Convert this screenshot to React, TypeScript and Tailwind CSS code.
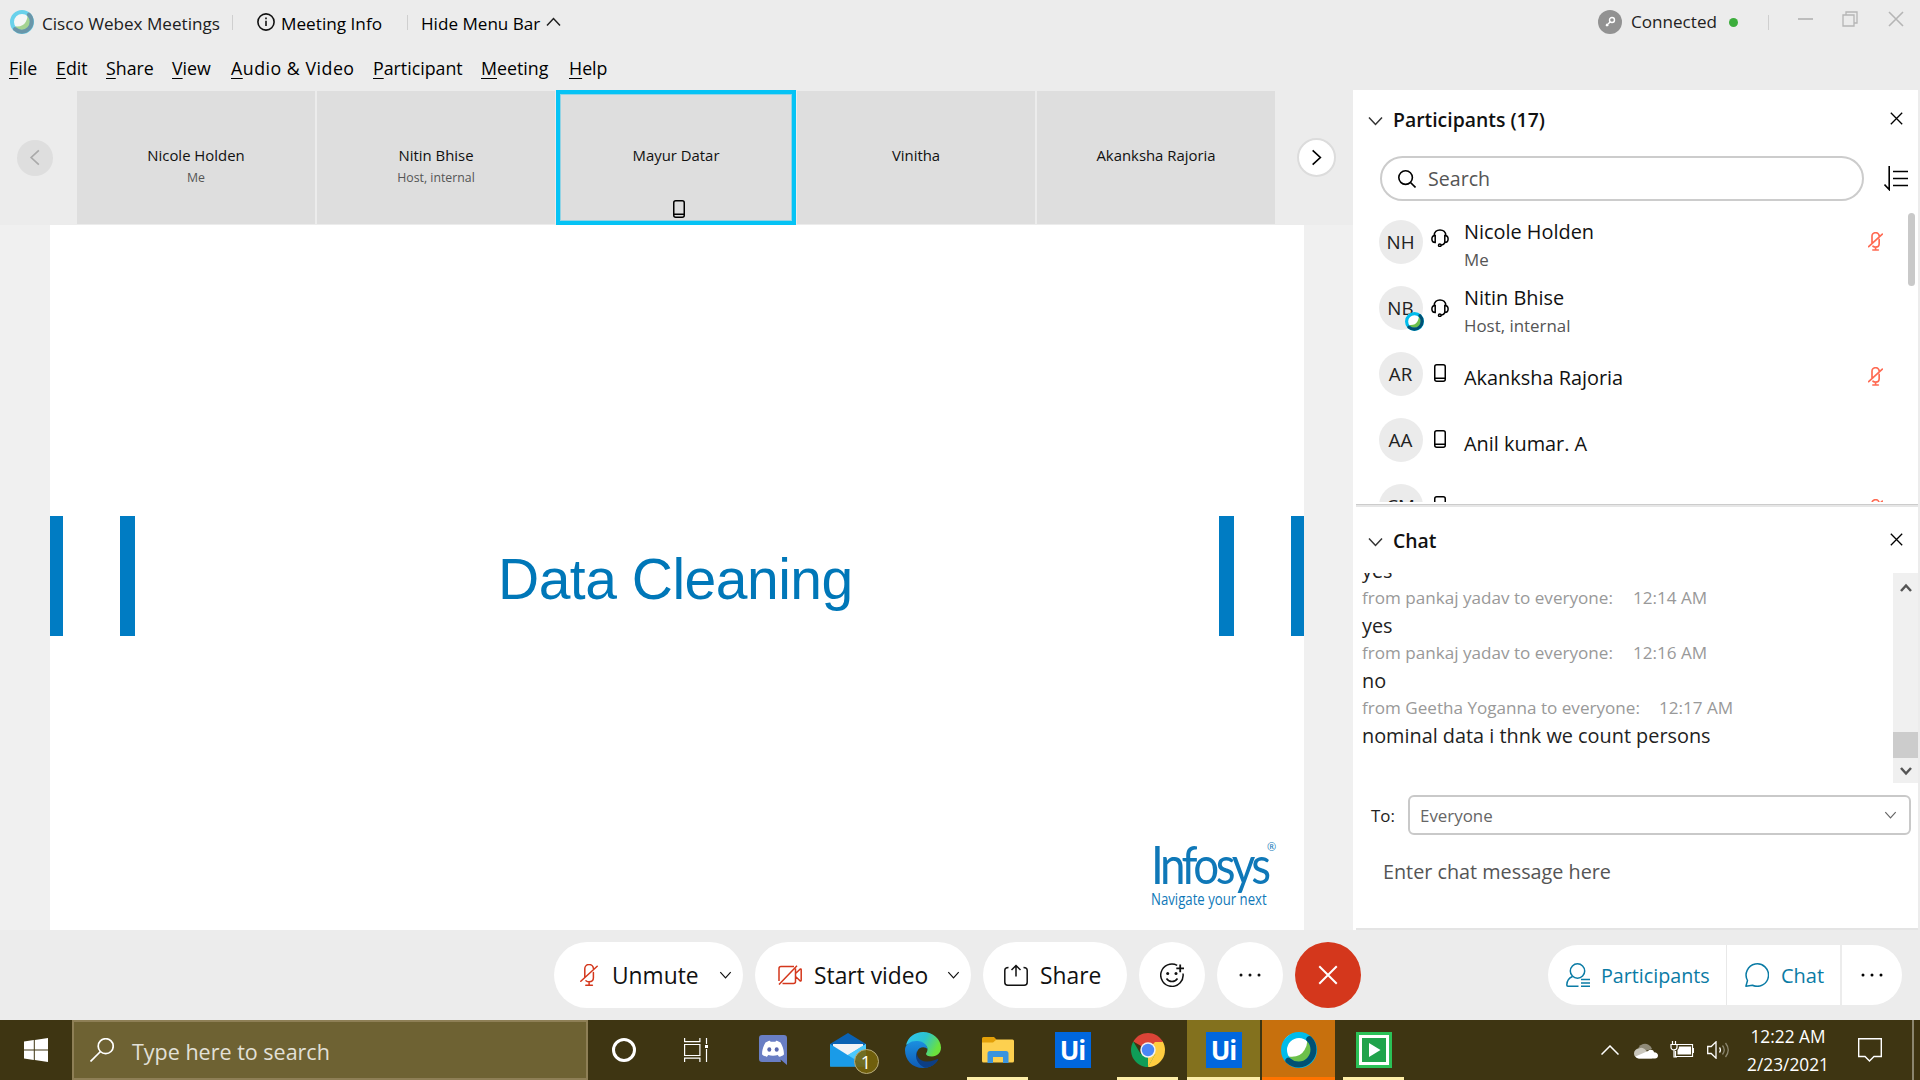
import React from "react";

type P = { className?: string };

const WebexBall = ({ className = "" }: P) => (
  <svg viewBox="0 0 36 36" fill="none" className={className}>
    <circle cx="18" cy="18" r="12.500" fill="#6cc04a" />
    <path d="M26 9.500A12.500 12.500 0 1 0 7.500 24.500Q19 26 23.500 18Q26.500 13 26 9.500Z" fill="#fff" />
    <circle cx="18" cy="18" r="15" stroke="#00bceb" strokeWidth="6" />
    <path d="M28.300 7.100A15 15 0 0 1 7.400 28.600" stroke="#005073" strokeWidth="6" strokeLinecap="round" />
  </svg>
);

const Chevron = ({ className = "", d = "M1 1.500 7.500 8.500 14 1.500" }: P & { d?: string }) => (
  <svg viewBox="0 0 15 10" fill="none" stroke="currentColor" strokeWidth="1.5" className={className}>
    <path d={d} />
  </svg>
);

const Cross = ({ className = "" }: P) => (
  <svg viewBox="0 0 16 16" fill="none" stroke="currentColor" strokeWidth="1.6" className={className}>
    <path d="M1 1 15 15M15 1 1 15" />
  </svg>
);

const Phone = ({ className = "" }: P) => (
  <svg viewBox="0 0 12 18" fill="none" stroke="currentColor" strokeWidth="1.5" className={className}>
    <rect x=".75" y=".75" width="10.500" height="16.500" rx="2" />
    <path d="M1 14.250h10" />
  </svg>
);

const Headset = ({ className = "" }: P) => (
  <svg viewBox="0 0 18 18" fill="none" stroke="currentColor" strokeWidth="1.500" className={className}>
    <path d="M3.200 6.500C3.200 3 5.700.9 9 .9s5.800 2.100 5.800 5.600M4.200 13.500C2 13.500.9 12 .9 10s1.100-3.500 3.300-3.500zM13.800 13.500c2.200 0 3.300-1.500 3.300-3.500s-1.100-3.500-3.300-3.500zM13.800 13.500c-.6 1.700-2 2.500-4 2.700" />
    <circle cx="8.800" cy="16.200" r="1.300" />
  </svg>
);

const MicOff = ({ className = "", weight = 1.5 }: P & { weight?: number }) => (
  <svg viewBox="0 0 18 22" fill="none" stroke="currentColor" strokeWidth={weight} strokeLinecap="round" className={className}>
    <path d="M4.800 13.500V5a4.300 4.300 0 0 1 8.600-.5M13.400 8.500v5.300c0 2.300-1.700 4-4.300 4-1.300 0-2.300-.4-3.100-1.100M9.100 18v3M5.800 21.200h6.600M.8 17.200 17.200 2.200" />
  </svg>
);

const Dots = ({ className = "" }: P) => (
  <svg viewBox="0 0 22 4" fill="currentColor" className={className}>
    <circle cx="2" cy="2" r="1.500" />
    <circle cx="11" cy="2" r="1.500" />
    <circle cx="20" cy="2" r="1.500" />
  </svg>
);

const MENU: [string, string][] = [
  ["File", "w-[47px]"],
  ["Edit", "w-[50px]"],
  ["Share", "w-[66px]"],
  ["View", "w-[59px]"],
  ["Audio & Video", "w-[142px] tracking-[0.5px]"],
  ["Participant", "w-[108px]"],
  ["Meeting", "w-[88px]"],
  ["Help", "w-[50px]"],
];

const TitleBar = () => (
  <header className="flex h-[45px] shrink-0 items-start text-[17.100px] leading-[24px] text-[#202020]">
    <WebexBall className="mt-[10px] ml-[10px] h-6 w-6 opacity-55" />
    <span className="mt-[12px] ml-[8px] w-[190px]">Cisco Webex Meetings</span>
    <i className="mt-[15px] h-[15px] w-px bg-[#cfcfcf]" />
    <svg viewBox="0 0 18 18" fill="none" stroke="#111" strokeWidth="1.600" className="mt-[13px] ml-[24px] h-[18px] w-[18px]">
      <circle cx="9" cy="9" r="8.100" />
      <path d="M9 7.800v5.200M9 4.600v1.700" />
    </svg>
    <span className="mt-[12px] ml-[6px] w-[126px] text-[17.200px] text-black">Meeting Info</span>
    <i className="mt-[15px] h-[15px] w-px bg-[#cfcfcf]" />
    <span className="mt-[12px] ml-[13px] w-[125px] text-black">Hide Menu Bar</span>
    <Chevron className="mt-[17px] h-[10px] w-[15px]" d="M1 8.500 7.500 1.500 14 8.500" />
    <span className="grow" />
    <span className="mt-[10px] flex h-6 w-6 items-center justify-center rounded-full bg-[#929292]">
      <svg viewBox="0 0 12 12" fill="none" stroke="#fff" strokeWidth="1.400" className="h-3 w-3">
        <circle cx="8" cy="4" r="2.500" />
        <path d="M6.300 5.700 2 10M2.200 8l2 2" />
      </svg>
    </span>
    <span className="mt-[10px] ml-[9px] w-[98px] text-[#222]">Connected</span>
    <i className="mt-[18px] h-[9px] w-[9px] rounded-full bg-[#3cad3c]" />
    <i className="mt-[15px] ml-[30px] h-[15px] w-px bg-[#cfcfcf]" />
    <i className="mt-[18px] ml-[29px] h-[2px] w-[15px] bg-[#bdbdbd]" />
    <svg viewBox="0 0 16 16" fill="none" stroke="#b5b5b5" strokeWidth="1.300" className="mt-[11px] ml-[29px] h-4 w-4">
      <path d="M1 4h11v11H1zM4 4V1h11v11h-3" />
    </svg>
    <Cross className="mt-[11px] mr-[16px] ml-[30px] h-4 w-4 text-[#b5b5b5]" />
  </header>
);

const MenuBar = () => (
  <nav className="flex h-[45px] shrink-0 pt-[11px] pl-[9px] text-[17.800px] leading-[24px] text-black">
    {MENU.map(([label, w]) => (
      <span key={label} className={`${w} shrink-0 whitespace-nowrap`}>
        <span className="underline decoration-1 underline-offset-[3px]">{label[0]}</span>
        {label.slice(1)}
      </span>
    ))}
  </nav>
);

const Tile = ({ name, sub, active }: { name: string; sub?: string; active?: boolean }) => (
  <div
    className={
      active
        ? "flex h-[135px] w-[240px] shrink-0 flex-col items-center border-4 border-[#05c3f5] bg-[#dedede] pt-[49px] shadow-[inset_0_0_0_1px_#93d3e4]"
        : "mt-px flex h-[133px] w-[238px] shrink-0 flex-col items-center bg-[#dedede] pt-[52px]"
    }
  >
    <span className="text-[14.900px] leading-[24px] text-[#111]">{name}</span>
    {sub && <span className="mt-px text-[12.300px] leading-[20px] text-[#555]">{sub}</span>}
    {active && <Phone className="mt-[33px] ml-[5px] h-[18px] w-[12px] shrink-0" />}
  </div>
);

const FilmStrip = () => (
  <div className="flex h-[135px] shrink-0">
    <div className="flex w-[77px] items-center">
      <span className="ml-[17px] flex h-9 w-9 items-center justify-center rounded-full bg-[#dedede] text-[#aaa]">
        <Chevron className="h-[11px] w-[18px] rotate-90" />
      </span>
    </div>
    <div className="flex w-[1199px]">
      <Tile name="Nicole Holden" sub="Me" />
      <i className="w-[2px]" />
      <Tile name="Nitin Bhise" sub="Host, internal" />
      <i className="w-px" />
      <Tile name="Mayur Datar" active />
      <i className="w-px" />
      <Tile name="Vinitha" />
      <i className="w-[2px]" />
      <Tile name="Akanksha Rajoria" />
    </div>
    <span className="mt-[48px] ml-[21px] flex h-[39px] w-[39px] items-center justify-center rounded-full border-2 border-[#dcdcdc] bg-white">
      <Chevron className="h-[11px] w-[17px] -rotate-90" />
    </span>
  </div>
);

const Slide = () => (
  <main className="flex min-h-0 grow bg-[#f0f0f0] pr-[49px] pl-[50px]">
    <div className="flex grow flex-col bg-white">
      <div className="mt-[291px] flex h-[120px] items-start">
        <i className="h-full w-[13px] bg-[#007cc3]" />
        <i className="ml-[57px] h-full w-[15px] bg-[#007cc3]" />
        <h1 className="mt-[30px] ml-[363px] w-[721px] font-['Liberation_Sans',sans-serif] text-[57px] leading-[66px] tracking-[-0.5px] whitespace-nowrap text-[#0077b8]">
          Data Cleaning
        </h1>
        <i className="h-full w-[15px] bg-[#007cc3]" />
        <i className="ml-[57px] h-full w-[13px] bg-[#007cc3]" />
      </div>
      <div className="mt-[199px] ml-[1101px] text-[#0f78b8]">
        <div className="flex h-[54px] items-start">
          <span className="w-[116px] origin-left scale-x-[0.88] font-['Lato',sans-serif] text-[52px] leading-[58px] tracking-[-4px]">Infosys</span>
          <span className="mt-[6px] text-[11px] leading-[12px]">®</span>
        </div>
        <div className="w-[136px] origin-left scale-x-[0.84] text-[15.700px] leading-[20px] whitespace-nowrap">Navigate your next</div>
      </div>
    </div>
  </main>
);

const PEOPLE = [
  { init: "NH", name: "Nicole Holden", sub: "Me", phone: false, muted: true, badge: false },
  { init: "NB", name: "Nitin Bhise", sub: "Host, internal", phone: false, muted: false, badge: true },
  { init: "AR", name: "Akanksha Rajoria", sub: "", phone: true, muted: true, badge: false },
  { init: "AA", name: "Anil kumar. A", sub: "", phone: true, muted: false, badge: false },
  { init: "CM", name: "Chandra M", sub: "", phone: true, muted: true, badge: false },
];

const PanelHead = ({ title, className = "" }: P & { title: string }) => (
  <div className={`flex shrink-0 items-start ${className}`}>
    <Chevron className="mt-[10px] ml-[15px] h-[10px] w-[15px] text-[#333]" />
    <h2 className="ml-[10px] grow text-[19.400px] leading-[28px] font-semibold text-[#111]">{title}</h2>
    <Cross className="mt-[6px] mr-[15px] h-[13px] w-[13px] text-black" />
  </div>
);

const ParticipantsPanel = () => (
  <section className="flex h-[412px] shrink-0 flex-col overflow-hidden">
    <PanelHead title="Participants (17)" className="mt-[16px] h-[50px]" />
    <div className="flex h-[45px] shrink-0 items-center">
      <div className="ml-[27px] flex h-[45px] w-[484px] items-center rounded-full border-2 border-[#cccccc]">
        <svg viewBox="0 0 18 18" fill="none" stroke="#000" strokeWidth="1.600" className="ml-[16px] h-[18px] w-[18px]">
          <circle cx="7.600" cy="7.600" r="6.800" />
          <path d="m12.500 12.500 5 5" />
        </svg>
        <span className="mt-px ml-[12px] text-[19.600px] leading-[28px] text-[#555]">Search</span>
      </div>
      <svg viewBox="0 0 24 25" fill="none" stroke="#000" strokeWidth="1.600" className="ml-[20px] h-[25px] w-6">
        <path d="M5.200 0v23.500L.5 18.500M9 5.500h15M9 12.500h15M9 19.500h15" />
      </svg>
    </div>
    <div className="flex min-h-0 grow overflow-hidden">
      <ul className="w-[555px] shrink-0 pt-[7px]">
        {PEOPLE.map((p) => (
          <li key={p.init} className="flex h-[66px] items-start pt-[12px]">
            <span className="relative ml-[25.500px] flex h-[44px] w-[44px] shrink-0 items-center justify-center rounded-full bg-[#ebebeb] text-[18.800px] leading-none text-[#222]">
              {p.init}
              {p.badge && <WebexBall className="absolute -right-[1px] -bottom-[1px] h-[19px] w-[19px]" />}
            </span>
            <span className="mt-[9px] ml-[8.500px] w-[33px] shrink-0">
              {p.phone ? <Phone className="mt-[3px] ml-[3px] h-[18px] w-[12px]" /> : <Headset className={p.badge ? "mt-[4px] h-[18px] w-[18px]" : "h-[18px] w-[18px]"} />}
            </span>
            <span className={p.sub ? "-mt-[2px] w-[404px]" : "mt-[12px] w-[404px]"}>
              <span className="block text-[19.900px] leading-[28px] text-[#111]">{p.name}</span>
              {p.sub && <span className="block text-[16.900px] leading-[28px] text-[#555]">{p.sub}</span>}
            </span>
            {p.muted && (
              <MicOff weight={2} className={p.sub ? "mt-[12px] h-[19px] w-[15px] text-[#ff6a52]" : "mt-[15px] h-[19px] w-[15px] text-[#ff6a52]"} />
            )}
          </li>
        ))}
      </ul>
      <i className="mt-[12px] h-[73px] w-[7px] rounded-full bg-[#c9c9c9]" />
    </div>
  </section>
);

const CHAT = [
  { from: "from pankaj yadav to everyone:", w: "w-[271px]", at: "12:14 AM", text: "yes" },
  { from: "from pankaj yadav to everyone:", w: "w-[271px]", at: "12:16 AM", text: "no" },
  { from: "from Geetha Yoganna to everyone:", w: "w-[297px]", at: "12:17 AM", text: "nominal data i thnk we count persons" },
];

const ChatPanel = () => (
  <section className="flex min-h-0 grow flex-col">
    <PanelHead title="Chat" className="mt-[20px] h-[38px]" />
    <div className="mt-[8px] flex h-[210px] shrink-0">
      <div className="h-full w-[540px] overflow-hidden pl-[9px] leading-[28px] text-[#222]">
        <div className="-mt-[16px] h-[27px] text-[19.800px]">yes</div>
        {CHAT.map((m) => (
          <div key={m.at} className="h-[55px]">
            <div className="flex h-[28px] text-[17.100px] text-[#999]">
              <span className={`${m.w} whitespace-nowrap`}>{m.from}</span>
              <span>{m.at}</span>
            </div>
            <div className="text-[19.850px]">{m.text}</div>
          </div>
        ))}
      </div>
      <div className="flex w-[25px] flex-col items-center bg-[#f0f0f0]">
        <svg viewBox="0 0 12 9" fill="none" stroke="#555" strokeWidth="2.500" className="mt-[10px] h-[9px] w-3">
          <path d="M1 8 6 2.500 11 8" />
        </svg>
        <i className="mt-[140px] h-[26px] w-full bg-[#cccccc]" />
        <svg viewBox="0 0 12 9" fill="none" stroke="#555" strokeWidth="2.500" className="mt-[9px] h-[9px] w-3">
          <path d="M1 1 6 6.500 11 1" />
        </svg>
      </div>
    </div>
    <div className="mt-[12px] flex h-[40px] shrink-0 items-center text-[16.900px] leading-[24px]">
      <span className="mt-px ml-[18px] w-[37px] text-[#222]">To:</span>
      <div className="flex h-[40px] w-[503px] items-center justify-between rounded-[6px] border-2 border-[#c9c9c9] pr-[12px] pl-[10px] text-[#666]">
        <span className="mt-[2px]">Everyone</span>
        <Chevron className="h-[8px] w-[13px]" />
      </div>
    </div>
    <div className="mt-[23px] ml-[30px] text-[19.800px] leading-[28px] text-[#555]">Enter chat message here</div>
    <i className="mt-auto ml-[3px] h-[2px] w-[562px] bg-[#e4e4e4]" />
  </section>
);

const Controls = () => (
  <div className="flex h-[90px] shrink-0 items-center bg-[#ececec] text-[22.800px] leading-[32px] whitespace-nowrap text-[#111]">
    <div className="ml-[554px] flex h-[66px] w-[189px] items-center rounded-full bg-white">
      <MicOff className="ml-[26px] h-[22px] w-[18px] text-[#d4371c]" />
      <span className="mt-[2px] ml-[14px] w-[94px]">Unmute</span>
      <Chevron className="ml-[13px] h-[8px] w-[13px]" />
    </div>
    <div className="ml-[12px] flex h-[66px] w-[216px] items-center rounded-full bg-white">
      <svg viewBox="0 0 24 20" fill="none" stroke="#d4371c" strokeWidth="1.500" strokeLinejoin="round" className="ml-[23px] h-5 w-6">
        <path d="M17.500 3.500v13c0 1.300-.7 2-2 2H4.500M1 16V3.500c0-1.300.7-2 2-2h13M1 19.500 19 .8M17.500 8.500 22 4.200c.6-.5 1.200-.2 1.200.5v10.600c0 .7-.6 1-1.200.5l-4.500-4.300" />
      </svg>
      <span className="mt-[2px] ml-[12px] w-[121px]">Start video</span>
      <Chevron className="ml-[12px] h-[8px] w-[13px]" />
    </div>
    <div className="ml-[12px] flex h-[66px] w-[144px] items-center rounded-full bg-white">
      <svg viewBox="0 0 24 22" fill="none" stroke="currentColor" strokeWidth="1.500" className="ml-[21px] h-[22px] w-6">
        <path d="M4.500 3.500C2 3.500.8 4.500.8 6.500v11.700c0 2 1 3 3 3h16.400c2 0 3-1 3-3V6.500c0-2-1.200-3-3.700-3M12 12.500V1.500M7.500 6 12 1.500 16.500 6" />
      </svg>
      <span className="mt-[2px] ml-[12px]">Share</span>
    </div>
    <div className="ml-[12px] flex h-[66px] w-[66px] items-center justify-center rounded-full bg-white">
      <svg viewBox="0 0 24 24" fill="none" stroke="currentColor" strokeWidth="1.500" className="h-6 w-6">
        <path d="M17.200 2.300A11.200 11.200 0 1 0 23 10.500M6.500 15.500c1.300 2 3.200 3.100 5.500 3.100s4.200-1.100 5.500-3.100" />
        <path d="M20.200 1.500v7.800M16.300 5.400h7.800" strokeWidth="1.800" />
        <circle cx="7.700" cy="10.400" r="1.500" fill="currentColor" stroke="none" />
        <circle cx="16" cy="10.400" r="1.500" fill="currentColor" stroke="none" />
      </svg>
    </div>
    <div className="ml-[12px] flex h-[66px] w-[66px] items-center justify-center rounded-full bg-white">
      <Dots className="h-1 w-[22px]" />
    </div>
    <div className="ml-[12px] flex h-[66px] w-[66px] items-center justify-center rounded-full bg-[#d4371c] text-white">
      <Cross className="h-[20px] w-[20px]" />
    </div>
    <div className="ml-[187px] flex h-[60px] w-[354px] items-center overflow-hidden rounded-full bg-white text-[19.700px] text-[#0a7ba5]">
      <svg viewBox="0 0 24 24" fill="none" stroke="currentColor" strokeWidth="1.500" className="ml-[18px] h-6 w-6">
        <circle cx="11.500" cy="8" r="7.200" />
        <path d="M6.500 13.500C3 15 .8 18.500.8 22c0 .8.400 1.200 1.200 1.200h10.500M15 16.500h9M15 20h9M15 23.300h9" />
      </svg>
      <span className="mt-[2px] ml-[11px] w-[125px]">Participants</span>
      <i className="h-full w-px bg-[#e8e8e8]" />
      <svg viewBox="0 0 24 24" fill="none" stroke="currentColor" strokeWidth="1.500" strokeLinejoin="round" className="ml-[18px] h-6 w-6">
        <path d="M.9 23.200 2.500 17.500A11.200 11.200 0 1 1 7.500 22.200Z" />
      </svg>
      <span className="mt-[2px] ml-[12px] w-[59px] text-[20px]">Chat</span>
      <i className="h-full w-[2px] bg-[#ececec]" />
      <Dots className="ml-[19px] h-1 w-[22px] text-black" />
    </div>
  </div>
);

const UiTile = () => (
  <span className="flex h-9 w-9 items-center justify-center bg-[#0067df] font-['Open_Sans',sans-serif] text-[26px] leading-none font-bold tracking-[-1px] text-white">Ui</span>
);

const Slot = ({ children, className = "", line = "" }: P & { children: React.ReactNode; line?: string }) => (
  <div className={`flex h-[60px] w-[75px] shrink-0 flex-col items-center ${className}`}>
    <div className="flex h-[57px] items-center pt-[3px]">{children}</div>
    <i className={`h-[3px] ${line}`} />
  </div>
);

const TaskBar = () => (
  <footer className="flex h-[60px] shrink-0 items-center bg-[#3e3512] text-white">
    <svg viewBox="0 0 24 24" fill="#fff" className="ml-[24px] h-6 w-6">
      <path d="M0 3.400 9.800 2v9.400H0zM10.800 1.900 24 0v11.400H10.800zM0 12.500h9.800V22L0 20.600zM10.800 12.500H24V24l-13.200-1.900z" />
    </svg>
    <div className="ml-[24px] flex h-[60px] w-[516px] items-center border-2 border-[#8e7f56] bg-[#6e6233]">
      <svg viewBox="0 0 24 24" fill="none" stroke="#fff" strokeWidth="1.700" className="ml-[16px] h-6 w-6">
        <circle cx="15.700" cy="8.200" r="7.500" />
        <path d="M10.500 13.500.5 23.500" />
      </svg>
      <span className="mt-[3px] ml-[18px] text-[21.500px] leading-[30px] text-[#e2e0d8]">Type here to search</span>
    </div>
    <Slot className="-ml-[2px]">
      <span className="h-6 w-6 rounded-full border-[3.500px] border-white" />
    </Slot>
    <Slot className="-ml-[3px]">
      <svg viewBox="0 0 24 24" fill="none" stroke="#fff" strokeWidth="1.200" className="h-6 w-6">
        <path d="M.6 0v3.600h15.300V0M.6 6.500h15.300v11H.6zM.6 24v-3.800h15.300V24M22.500 0v6M22.500 11v13" />
        <path d="M21 7h3v3h-3z" fill="#fff" stroke="none" />
      </svg>
    </Slot>
    <Slot className="ml-[2px]">
      <svg viewBox="0 0 28 30" className="h-[30px] w-7">
        <path d="M3 0h22a3 3 0 0 1 3 3v27l-6.500-5.500L22 27H3a3 3 0 0 1-3-3V3a3 3 0 0 1 3-3Z" fill="#697ec4" />
        <path d="M6.500 7.500C8.500 6 11 5.700 11 5.700l.5 1.100h5l.5-1.100s2.500.3 4.500 1.800c2 3.500 3.700 8 3.400 12-2 2-4.900 2.300-4.900 2.300l-1.200-1.800c-3.200.9-6.400.9-9.600 0L8 21.800s-2.900-.3-4.900-2.300c-.3-4 1.400-8.500 3.400-12Z" fill="#fff" />
        <ellipse cx="10.300" cy="14.500" rx="2" ry="2.200" fill="#5968b0" />
        <ellipse cx="17.700" cy="14.500" rx="2" ry="2.200" fill="#5968b0" />
      </svg>
    </Slot>
    <Slot>
      <span className="relative block h-[34px] w-9">
        <svg viewBox="0 0 36 34" className="h-full w-full">
          <path d="M0 11 18 0l18 11v8H0z" fill="#0a62b4" />
          <path d="M3 11h30v12H3z" fill="#f1f3f6" />
          <path d="M36 11v22.500H0L18 22z" fill="#33b7f5" />
          <path d="M0 11 36 33.500H0z" fill="#1a9be8" />
          <path d="M18 22 36 11v22z" fill="#4cc9fb" />
        </svg>
        <span className="absolute top-[16px] left-[24px] flex h-[25px] w-[25px] items-center justify-center rounded-full border border-[#b8ad7c] bg-[#75640c]/90 text-[18px] leading-none">1</span>
      </span>
    </Slot>
    <Slot>
      <svg viewBox="0 0 36 36" className="h-9 w-9">
        <defs>
          <linearGradient id="edgeTop" x1="0" x2="1" y1="0" y2=".4">
            <stop offset="0" stopColor="#2fc5f5" />
            <stop offset=".55" stopColor="#2cc3d0" />
            <stop offset="1" stopColor="#6be23c" />
          </linearGradient>
          <linearGradient id="edgeLow" x1="0" x2="0" y1="0" y2="1">
            <stop offset="0" stopColor="#1b8fe0" />
            <stop offset="1" stopColor="#0f5cb5" />
          </linearGradient>
        </defs>
        <path d="M1 13C3 5 10 0 18 0c10 0 18 7.500 18 15.500C36 21 32 24.500 27 24.500c-4 0-6-1.500-6-2.500s1.500-2 1.500-4.500c0-4-4-7-9-7C8 10.500 3 12 1 13Z" fill="url(#edgeTop)" />
        <path d="M0 18C0 12 6 8.500 12.500 9c6 .4 10 4 10 8.500C21 14.500 14 14 12 20c-2 7 6 13 13 12 3-.5 5-1.500 7.500-3.500C29.500 33 24 36 18 36 7 36 0 28 0 18Z" fill="url(#edgeLow)" />
        <path d="M12 19c-1 6 3 10 9 10.500 5 .4 9-1.500 11.500-2.500.6-.2 1 .3.600 1C30.500 32.500 26 35.300 20 35.800 13 33 9 26 12 19Z" fill="#0d3f85" />
      </svg>
    </Slot>
    <Slot line="w-[61px] bg-[#fdeea8]">
      <svg viewBox="0 0 32 26" className="h-[26px] w-8">
        <path d="M0 1.500A1.500 1.500 0 0 1 1.500 0H12l2.500 2.500V6H0z" fill="#e3a008" />
        <path d="M0 5.500h11l3.500-3H30.500A1.500 1.500 0 0 1 32 4v20a1.500 1.500 0 0 1-1.500 1.500h-29A1.500 1.500 0 0 1 0 24z" fill="#fdd04f" />
        <path d="M5.500 26V16.500A2.500 2.500 0 0 1 8 14h16a2.500 2.500 0 0 1 2.500 2.500V26H21v-6H11v6z" fill="#3a94de" />
      </svg>
    </Slot>
    <Slot>
      <UiTile />
    </Slot>
    <Slot line="w-[61px] bg-[#fdeea8]">
      <svg viewBox="0 0 34 34" className="h-[34px] w-[34px]">
        <path d="M2.300 8.500A17 17 0 0 1 31.700 8.500L17 17Z" fill="#db4437" />
        <path d="M31.700 8.500A17 17 0 0 1 17 34L17 17 24 9z" fill="#ffcd40" />
        <path d="M2.300 8.500A17 17 0 0 0 17 34l7.300-13L17 17 9.700 21Z" fill="#0f9d58" />
        <path d="M17 34 24.300 21 24 17h-7z" fill="#ffcd40" />
        <path d="M17 9h14.900L31 7.500H10z" fill="#db4437" />
        <circle cx="17" cy="17" r="7.700" fill="#f1f1f1" />
        <circle cx="17" cy="17" r="6.200" fill="#4a86f5" />
      </svg>
    </Slot>
    <Slot className="ml-[2px] w-[73px]! bg-[#83711e]" line="w-full bg-[#fdeea8]">
      <UiTile />
    </Slot>
    <Slot className="ml-[2px] w-[73px]! bg-[#c7700d]" line="w-full bg-[#ff7300]">
      <WebexBall className="h-9 w-9" />
    </Slot>
    <Slot className="ml-px" line="w-[61px] bg-[#fdeea8]">
      <svg viewBox="0 0 36 36" className="h-9 w-9">
        <path d="M0 0h36v36H0z" fill="#2bc157" />
        <path d="M4.500 4.500h27v27h-27z" fill="#20a34b" stroke="#fff" strokeWidth="3" />
        <path d="M13 11v14l11.500-7z" fill="#fff" />
      </svg>
    </Slot>
    <span className="grow" />
    <svg viewBox="0 0 18 10" fill="none" stroke="#fff" strokeWidth="1.500" className="h-[10px] w-[18px]">
      <path d="M.5 9.500 9 1l8.500 8.500" />
    </svg>
    <svg viewBox="0 0 24 16" className="mt-[1px] ml-[15px] h-4 w-6">
      <path d="M4 10a6.500 6.500 0 0 1 14-4z" fill="#8f8a78" />
      <path d="M5 15.500a5 5 0 0 1 0-10c2-1.500 5-.5 7 2l6 8z" fill="#c9c6bb" />
      <path d="M5 15.500a4 4 0 0 1-3.500-2L14 8c2-2 5.500-1.200 6 1.200 2.500 0 4 1.300 4 3.300 0 1.800-1.300 3-3 3z" fill="#fff" />
    </svg>
    <svg viewBox="0 0 24 17" fill="none" stroke="#fff" strokeWidth="1.200" className="-mt-[2px] ml-[12px] h-[17px] w-6">
      <path d="M7.500 3.500h15v12h-17V10M22.500 7.500h1v4h-1M2.500 0v3M5.500 0v3M1 3.500h6v2.800c0 1.500-1 2.500-3 2.500s-3-1-3-2.500zM4 9v7h3" />
      <path d="M9 5.500h12v8H7.500V9C8.500 8 9 7 9 5.500z" fill="#fff" stroke="none" />
    </svg>
    <svg viewBox="0 0 24 18" fill="none" stroke="#fff" strokeWidth="1.300" className="ml-[13px] h-[18px] w-6">
      <path d="M.7 5.500h3.500L9 .9v16.200l-4.800-4.600H.7zM12.500 6.500q1.800 2.500 0 5" />
      <path d="M15.500 4.500q3.500 4.500 0 9M18.500 2q5.500 7 0 14" stroke="#8b866f" />
    </svg>
    <div className="mt-[2px] ml-[12px] flex w-[90px] flex-col items-center text-[17.300px] leading-[28px] whitespace-nowrap">
      <span>12:22 AM</span>
      <span>2/23/2021</span>
    </div>
    <svg viewBox="0 0 24 24" fill="none" stroke="#fff" strokeWidth="1.400" className="ml-[25px] h-6 w-6">
      <path d="M.7.7h22.600v17.800H16l-4.500 4.500L7 18.500H.7z" />
    </svg>
    <i className="mr-[6px] ml-[30px] h-full w-[2px] bg-[#8b866f]" />
  </footer>
);

export default function App() {
  return (
    <div className="flex h-[1080px] w-[1920px] flex-col overflow-hidden bg-[#ececec] font-['Open_Sans',sans-serif] whitespace-nowrap">
      <TitleBar />
      <MenuBar />
      <div className="flex h-[840px] shrink-0">
        <div className="flex w-[1353px] shrink-0 flex-col">
          <FilmStrip />
          <Slide />
        </div>
        <aside className="mr-[2px] flex w-[565px] flex-col bg-white">
          <ParticipantsPanel />
          <i className="mt-[2px] ml-[3px] h-[3px] shrink-0 border-t border-[#cccccc] bg-[#e6e6e6]" />
          <ChatPanel />
        </aside>
      </div>
      <Controls />
      <TaskBar />
    </div>
  );
}
